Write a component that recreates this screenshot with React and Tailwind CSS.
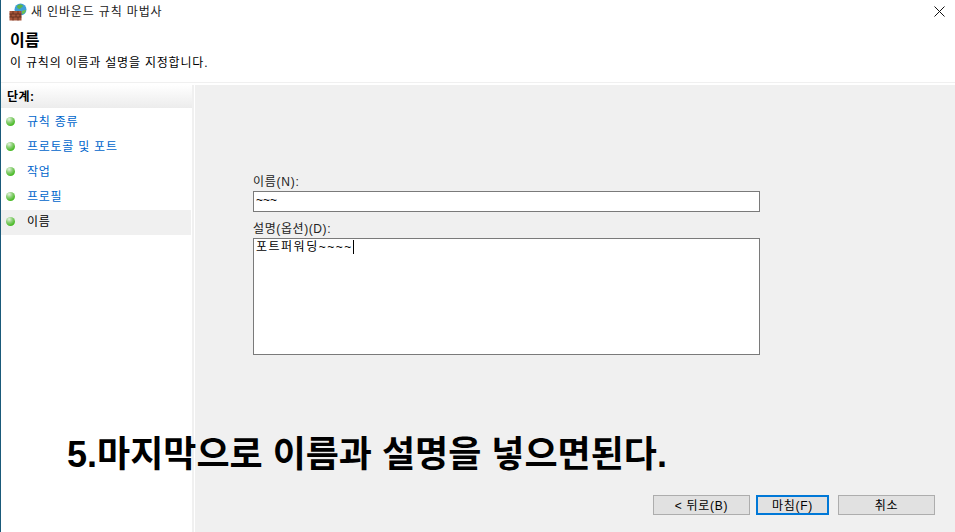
const FONT = "font-['Liberation_Sans','Noto_Sans_CJK_KR',sans-serif]";

const steps = [
  { label: "규칙 종류" },
  { label: "프로토콜 및 포트" },
  { label: "작업" },
  { label: "프로필" },
  { label: "이름", active: true },
];

const FirewallIcon = () => (
  <svg width="18" height="18" viewBox="0 0 18 18">
    <circle cx="11.5" cy="6.5" r="6" fill="#3f9fd8" />
    <path d="M8 3c2-2 5-2 6 0-1 2-2 1-3 3-2 0-3-1-3-3z" fill="#5db548" />
    <path d="M13 8c2-1 3-1 4-1-1 3-2 4-4 4z" fill="#6cc04f" />
    <rect x="0.5" y="8" width="12" height="9.5" fill="#a5553a" />
    <path d="M.5 11h12M.5 14h12M4 8v3M9 8v3M2 11v3M7 11v3M11 11v3M4 14v3.5M9 14v3.5" stroke="#5a2c1c" strokeWidth="0.8" />
  </svg>
);

const Dot = () => (
  <span className="w-[9px] h-[9px] rounded-full bg-[radial-gradient(circle_at_35%_25%,#e4f2de_0%,#8fd07a_35%,#4cbb2a_70%)]" />
);

const Button = ({ children, primary, className }) => (
  <button
    className={`h-[20px] pt-[1px] flex items-center justify-center bg-[#e1e1e1] text-[12px] tracking-[0.7px] text-black ${
      primary ? "border-2 border-[#0078d7]" : "border border-[#adadad]"
    } ${className}`}
  >
    {children}
  </button>
);

export default function App() {
  return (
    <div className={`${FONT} relative w-[955px] h-[532px] overflow-hidden flex flex-col bg-white border-l border-[#1a5a7a]`}>
      {/* title bar */}
      <div className="h-[23px] flex items-center pl-[8px] pr-[10px] shrink-0">
        <FirewallIcon />
        <span className="ml-[4px] text-[12px] tracking-[0.85px] text-[#222]">새 인바운드 규칙 마법사</span>
        <svg className="ml-auto" width="11" height="11" viewBox="0 0 11 11">
          <path d="M.5.5l10 10M10.5.5l-10 10" stroke="#111" strokeWidth="1" fill="none" />
        </svg>
      </div>

      {/* header */}
      <div className="h-[60px] pl-[9px] pt-[9px] shrink-0 border-b border-[#f0f0f0]">
        <div className="text-[16px] leading-[18px] font-bold text-black">이름</div>
        <div className="mt-[5px] text-[12px] leading-[16px] tracking-[0.8px] text-black">이 규칙의 이름과 설명을 지정합니다.</div>
      </div>

      <div className="flex-1 flex mt-[2px] min-h-0">
        {/* steps */}
        <div className="w-[193px] shrink-0 border-r-[2px] border-[#f0f0f0]">
          <div className="h-[23px] flex items-center pl-[6px] text-[12px] tracking-[0.5px] font-bold text-black bg-gradient-to-b from-white to-[#ececec]">
            단계:
          </div>
          <div className="pt-[2px]">
            {steps.map((step) => (
              <div
                key={step.label}
                className={`h-[25px] flex items-center pl-[5px] pb-[2px] gap-[12px] text-[12px] tracking-[0.75px] mr-[1px] ${
                  step.active ? "bg-[#f0f0f0] text-black" : "text-[#0066cc]"
                }`}
              >
                <Dot />
                <span>{step.label}</span>
              </div>
            ))}
          </div>
        </div>

        {/* form */}
        <div className="flex-1 ml-[1px] bg-[#f0f0f0] flex flex-col pl-[58px]">
          <label className="mt-[90px] text-[12px] leading-[14px] tracking-[0.75px] text-[#222]">이름(N):</label>
          <div className="mt-[2px] w-[507px] h-[21px] bg-white border border-[#7a7a7a] pl-[2px] text-[12px] leading-[17px] text-black">
            ~~~
          </div>
          <label className="mt-[10px] text-[12px] leading-[14px] tracking-[0.6px] text-[#222]">설명(옵션)(D):</label>
          <div className="mt-[2px] w-[507px] h-[117px] bg-white border border-[#7a7a7a] pl-[2px] text-[12px] leading-[16px] text-black">
            <span className="tracking-[1.5px] border-r border-black">포트퍼워딩~~~~</span>
          </div>
          <div className="mt-[140px] w-[682px] flex justify-end gap-[6px]">
            <Button className="w-[97px]">&lt; 뒤로(B)</Button>
            <Button primary className="w-[73px] mr-[3px]">마침(F)</Button>
            <Button className="w-[97px]">취소</Button>
          </div>
        </div>
      </div>

      {/* caption drawn over the dialog */}
      <div className="absolute left-[66px] top-[433px] text-[36px] leading-[44px] font-bold text-black whitespace-nowrap">
        5.마지막으로 이름과 설명을 넣으면된다.
      </div>
    </div>
  );
}
